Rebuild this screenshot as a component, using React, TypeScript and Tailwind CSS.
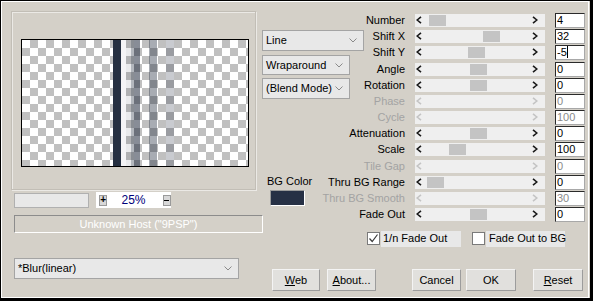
import React from 'react';

type Row = {
  label: string;
  value: string;
  thumb?: number;
  disabled?: boolean;
  caret?: boolean;
  gap?: boolean;
};

const rows: Row[] = [
  { label: 'Number', value: '4', thumb: 14 },
  { label: 'Shift X', value: '32', thumb: 68 },
  { label: 'Shift Y', value: '-5', thumb: 53, caret: true },
  { label: 'Angle', value: '0', thumb: 55, gap: true },
  { label: 'Rotation', value: '0', thumb: 55 },
  { label: 'Phase', value: '0', disabled: true },
  { label: 'Cycle', value: '100', disabled: true },
  { label: 'Attenuation', value: '0', thumb: 55 },
  { label: 'Scale', value: '100', thumb: 34 },
  { label: 'Tile Gap', value: '0', disabled: true, gap: true },
  { label: 'Thru BG Range', value: '0', thumb: 12 },
  { label: 'Thru BG Smooth', value: '30', disabled: true },
  { label: 'Fade Out', value: '0', thumb: 55 },
];

const Arrow = ({ dir, disabled }: { dir: 'left' | 'right'; disabled?: boolean }) => (
  <svg width="6" height="8" viewBox="0 0 6 8" className="shrink-0">
    <polyline
      points={dir === 'left' ? '5,0.8 1.2,4 5,7.2' : '1,0.8 4.8,4 1,7.2'}
      fill="none"
      stroke={disabled ? '#c4c4c4' : '#1a1a1a'}
      strokeWidth="1.6"
    />
  </svg>
);

const Chevron = () => (
  <svg width="8" height="5" viewBox="0 0 8 5" className="shrink-0">
    <polyline points="0.5,0.5 4,4 7.5,0.5" fill="none" stroke="#8a8a8a" strokeWidth="1" />
  </svg>
);

const Dropdown = ({ label, className }: { label: string; className: string }) => (
  <div
    className={`flex items-center justify-between bg-[#e8e8e8] border border-[#a4a4a4] pl-[3px] pr-[6px] ${className}`}
  >
    <span>{label}</span>
    <Chevron />
  </div>
);

const Slider = ({ thumb, disabled }: { thumb?: number; disabled?: boolean }) => (
  <div className="ml-[10px] w-[130px] h-[13px] bg-[#efefef] flex items-center">
    <div className="ml-[1px]">
      <Arrow dir="left" disabled={disabled} />
    </div>
    {thumb !== undefined && (
      <div className="w-[17px] h-[11px] mt-[1px] bg-[#c4c4c4]" style={{ marginLeft: thumb - 7 }} />
    )}
    <div className="flex-1" />
    <div className="mr-[7px]">
      <Arrow dir="right" disabled={disabled} />
    </div>
  </div>
);

const Button = ({ children, className }: { children: React.ReactNode; className: string }) => (
  <div
    className={`h-[22px] flex items-center justify-center bg-[#e1e0dd] border-t border-l border-[#f4f4f4] border-r border-b border-r-[#9c9c9c] border-b-[#9c9c9c] ${className}`}
  >
    {children}
  </div>
);

const Checkbox = ({ checked }: { checked?: boolean }) => (
  <div className="w-[13px] h-[13px] bg-white border border-[#7a7a7a] flex items-center justify-center">
    {checked && (
      <svg width="11" height="11" viewBox="0 0 11 11">
        <polyline points="1.5,5.5 4.2,8.5 9.5,1.5" fill="none" stroke="#3a3a3a" strokeWidth="1.2" />
      </svg>
    )}
  </div>
);

export default function App() {
  return (
    <div className="w-[593px] h-[301px] bg-[#d4d0c8] border-t border-l border-black border-r-[3px] border-b-[3px] font-['Liberation_Sans',Arial,sans-serif] text-[11px] leading-[13px] text-black overflow-hidden">
      <div className="h-full flex border-t border-l border-white border-r border-b border-r-white border-b-white mr-[1px] mb-[1px]">
        {/* left column */}
        <div className="ml-[9px] mt-[9px] w-[249px] shrink-0 flex flex-col">
          <div className="w-[245px] h-[179px] border border-[#c2beb6] shadow-[inset_1px_1px_0_#ebe9e5,1px_1px_0_#ebe9e5]">
            <div className="ml-[9px] mt-[27px] w-[228px] h-[128px] border border-black bg-[conic-gradient(#c0c0c0_25%,#ffffff_0_50%,#c0c0c0_0_75%,#ffffff_0)] bg-[length:16px_16px] flex">
              <div className="w-[91px]" />
              <div className="w-[8px] bg-[#263042]" />
              <div className="w-[5px] bg-[#f4f4f6]" />
              <div className="w-[5px] bg-[#263042]/10" />
              <div className="w-[3px] bg-[#263042]/35" />
              <div className="w-[6px] bg-[#263042]/55" />
              <div className="w-[9px]" />
              <div className="w-[8px] bg-[#263042]/40" />
              <div className="w-[9px]" />
              <div className="w-[8px] bg-[#263042]/25" />
            </div>
          </div>

          <div className="mt-[2px] flex items-start">
            <div className="ml-[3px] mt-[1px] w-[75px] h-[15px] bg-[#e8e8e8] border border-[#b0b0b0]" />
            <div className="ml-[7px] w-[75px] h-[16px] bg-white flex items-center">
              <div className="ml-[3px] w-[9px] h-[11px] bg-[#d8d8d8] border border-[#9a9a9a] flex items-center justify-center text-[10px] font-bold leading-none">
                +
              </div>
              <span className="ml-[14px] text-[#00007a] text-[12px]">25%</span>
              <div className="ml-[17px] w-[9px] h-[11px] bg-[#d8d8d8] border border-[#9a9a9a] flex items-center justify-center">
                <div className="w-[5px] h-[1px] bg-black" />
              </div>
            </div>
          </div>

          <div className="ml-[3px] mt-[7px] w-[249px] h-[18px] shrink-0 border-t border-l border-[#8c8c8c] border-b border-r border-b-white border-r-white flex items-center justify-center text-white">
            Unknown Host ("9PSP")
          </div>

          <Dropdown label="*Blur(linear)" className="ml-[3px] mt-[25px] w-[225px] h-[21px] pl-[2px]" />
        </div>

        {/* middle column */}
        <div className="w-[105px] shrink-0 flex flex-col">
          <Dropdown label="Line" className="ml-[2px] mt-[28px] w-[102px] h-[21px]" />
          <Dropdown label="Wraparound" className="ml-[2px] mt-[4px] w-[88px] h-[20px]" />
          <Dropdown label="(Blend Mode)" className="ml-[2px] mt-[3px] w-[88px] h-[21px]" />
          <div className="ml-[7px] mt-[76px] whitespace-nowrap">BG Color</div>
          <div className="ml-[10px] mt-[2px] w-[35px] h-[16px] bg-[#263045] border-t border-l border-[#9a9a9a] border-b border-r border-b-white border-r-white" />
          <div className="mt-[63px] flex whitespace-nowrap">
            <Button className="ml-[12px] w-[48px] shrink-0">
              <span>
                <span className="underline">W</span>eb
              </span>
            </Button>
            <Button className="ml-[7px] w-[49px] shrink-0">
              <span>
                <span className="underline">A</span>bout...
              </span>
            </Button>
          </div>
        </div>

        {/* right column */}
        <div className="flex flex-col mt-[10px]">
          {rows.map((r) => (
            <div key={r.label} className={`h-[16px] flex items-center ${r.gap ? 'mt-[1px]' : ''}`}>
              <div
                className={`-ml-[50px] w-[90px] shrink-0 text-right whitespace-nowrap ${r.disabled ? 'text-[#a3a3a3]' : 'text-black'}`}
              >
                {r.label}
              </div>
              <Slider thumb={r.thumb} disabled={r.disabled} />
              <div
                className={`ml-[10px] w-[30px] h-[15px] bg-white border-t border-l border-[#2a2a2a] border-r border-b border-r-[#a8a8a8] border-b-[#a8a8a8] pl-[1px] flex items-center ${r.disabled ? 'text-[#8a8a8a]' : 'text-black'}`}
              >
                {r.value}
                {r.caret && <span className="w-[1px] h-[12px] bg-black" />}
              </div>
            </div>
          ))}

          <div className="mt-[8px] h-[17px] flex items-center whitespace-nowrap">
            <div className="ml-[2px]">
              <Checkbox checked />
            </div>
            <div className="ml-[1px] w-[80px] h-[16px] pl-[2px] bg-[#e8e8e8] flex items-center">1/n Fade Out</div>
            <div className="ml-[11px]">
              <Checkbox />
            </div>
            <div className="ml-[1px] w-[79px] h-[16px] pl-[3px] bg-[#e8e8e8] flex items-center">Fade Out to BG</div>
          </div>

          <div className="mt-[22px] flex whitespace-nowrap">
            <Button className="ml-[47px] w-[49px]">Cancel</Button>
            <Button className="ml-[5px] w-[50px]">OK</Button>
            <Button className="ml-[17px] w-[50px]">
              <span>
                <span className="underline">R</span>eset
              </span>
            </Button>
          </div>
        </div>
      </div>
    </div>
  );
}
